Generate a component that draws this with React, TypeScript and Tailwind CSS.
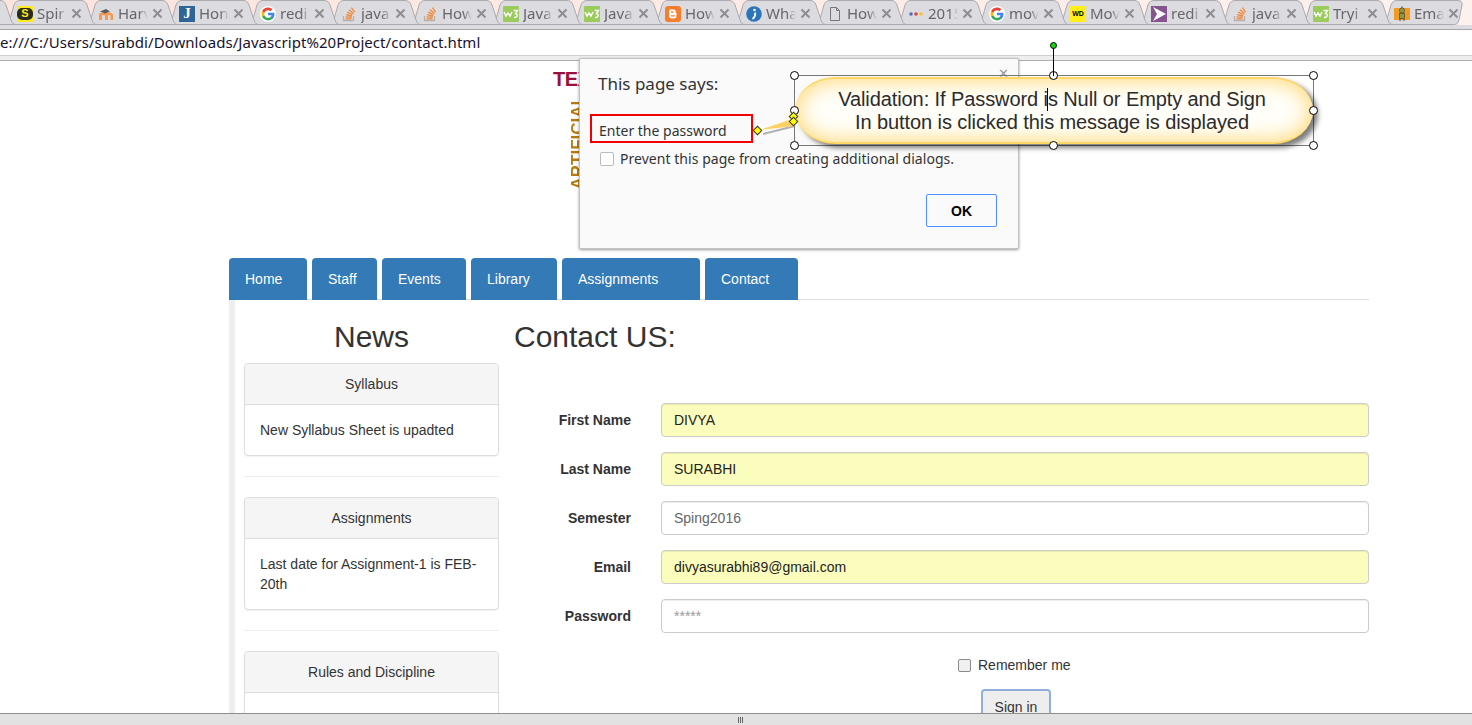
import React from 'react';

const X = () => (
    <svg width="11" height="11" viewBox="0 0 11 11" className="shrink-0">
        <path d="M1.5 1.5 L9.5 9.5 M9.5 1.5 L1.5 9.5" stroke="#8e8e92" strokeWidth="2" />
    </svg>
);

const Stack = () => (
    <svg width="16" height="16" viewBox="0 0 16 16" fill="none" stroke="#f08a3c" strokeWidth="1.3">
        <path d="M2.5 10 V14.5 H12.5 V10" stroke="#b8b0a8" />
        <path d="M4.5 12.8 H10.5 M4.7 10.8 L10.6 11.4 M5.2 8.6 L10.9 10 M6.2 6.2 L11.5 8.7 M8 3.8 L12.5 7.4 M10.4 1.6 L13.6 6.2" />
    </svg>
);

const W3 = () => (
    <div className="w-4 h-4 bg-[#9bcb5c] rounded-[1px] flex items-center justify-center">
        <svg width="16" height="16" viewBox="0 0 16 16" fill="none" stroke="#fff" strokeWidth="1.4">
            <path d="M1 6 L3 10 L5 7 L7 10 L9 6" />
            <path d="M10.5 4.5 H14.5 L12.5 7.5 C15 7.5 15 12 11 11.5" />
        </svg>
    </div>
);

const GoogleG = () => (
    <div className="w-4 h-4 bg-white rounded-full flex items-center justify-center">
        <svg width="14" height="14" viewBox="0 0 48 48">
            <path fill="#4285f4" d="M46 24.5c0-1.6-.1-3.100-.4-4.500H24v8.500h12.400c-.5 2.800-2.100 5.200-4.500 6.800v5.600h7.200C43.400 36.900 46 31.200 46 24.500z" />
            <path fill="#34a853" d="M24 46c6 0 11.100-2 14.800-5.400l-7.200-5.600c-2 1.300-4.600 2.100-7.600 2.100-5.800 0-10.700-3.900-12.500-9.200H4v5.800C7.700 41 15.300 46 24 46z" />
            <path fill="#fbbc05" d="M11.500 27.900c-.9-2.700-.9-5.500 0-8.200v-5.800H4c-2.700 5.300-2.700 14.500 0 19.800z" />
            <path fill="#ea4335" d="M24 10.900c3.300 0 6.200 1.100 8.500 3.300l6.400-6.400C35 4.200 30 2 24 2 15.300 2 7.700 7 4 13.900l7.500 5.800c1.800-5.300 6.700-8.800 12.500-8.800z" />
        </svg>
    </div>
);

const icons: Record<string, React.ReactNode> = {
    spir: (
        <div className="w-4 h-4 bg-[#ffe81f] flex items-center justify-center">
            <div className="w-4 h-[12px] bg-[#2b2b20] rounded-[5px] flex items-center justify-center">
                <span className="font-['Liberation_Sans',sans-serif] text-[11px] leading-none font-bold text-[#ffe81f]">S</span>
            </div>
        </div>
    ),
    moodle: (
        <svg width="16" height="16" viewBox="0 0 16 16">
            <path d="M1 14 V9 C1 7 3 6.500 5 7 C6 6 8 6 9 7 C11 6 15 6.500 15 9.500 V14 H12.500 V10 C12.500 8.500 10 8.500 10 10 V14 H7 V10 C7 8.500 4 8.500 4 10 V14 Z" fill="#f59a4e" />
            <path d="M2 5.500 L8 3 L12 5.500 L7 7.500 Z" fill="#5a5a5a" />
        </svg>
    ),
    j: (
        <div className="w-4 h-4 bg-[#2f6596] flex items-center justify-center">
            <span className="font-['Liberation_Serif',serif] text-[15px] leading-none font-bold text-white">J</span>
        </div>
    ),
    google: <GoogleG />,
    stack: <Stack />,
    w3: <W3 />,
    blogger: (
        <svg width="16" height="16" viewBox="0 0 16 16">
            <rect width="16" height="16" rx="3" fill="#f57d2c" />
            <path d="M5.500 3.500 H8.500 C10 3.500 10.800 4.500 10.800 6 V7 H11.500 V10 C11.500 11.500 10.500 12.500 9 12.500 H6.500 C5 12.500 4.200 11.500 4.200 10 V5 C4.200 4 4.500 3.500 5.500 3.500 Z" fill="#fff" />
            <path d="M6 6 H8.300 M6 9.800 H9.800" stroke="#f57d2c" strokeWidth="1.300" />
        </svg>
    ),
    info: (
        <svg width="16" height="16" viewBox="0 0 16 16">
            <circle cx="8" cy="8" r="7.800" fill="#2a75bb" />
            <circle cx="8.500" cy="4" r="1.300" fill="#fff" />
            <path d="M9.300 6.500 C9.300 9 9.500 11 6.500 13" stroke="#fff" strokeWidth="1.800" fill="none" />
        </svg>
    ),
    file: (
        <svg width="16" height="16" viewBox="0 0 16 16" fill="#dcdce0" stroke="#77777a">
            <path d="M3.500 1.500 H9.500 L12.500 4.500 V14.500 H3.500 Z" />
            <path d="M9.500 1.500 V4.500 H12.500" fill="none" />
        </svg>
    ),
    dots: (
        <svg width="16" height="16" viewBox="0 0 16 16">
            <circle cx="3" cy="8" r="1.800" fill="#4e6cc4" />
            <circle cx="8" cy="8" r="1.800" fill="#e0453c" />
            <circle cx="13" cy="8" r="1.800" fill="#f5c72e" />
        </svg>
    ),
    wd: (
        <div className="w-4 h-4 bg-[#ffee1a] flex items-center justify-center">
            <span className="font-['Liberation_Sans',sans-serif] text-[7px] leading-none font-bold text-black">WD</span>
        </div>
    ),
    vs: (
        <svg width="16" height="16" viewBox="0 0 16 16">
            <rect width="16" height="16" fill="#85548e" />
            <path d="M2 1 L15 8 L2 15 L6 8 Z" fill="#fff" />
        </svg>
    ),
    robot: (
        <svg width="16" height="16" viewBox="0 0 16 16">
            <rect y="2" width="16" height="12" fill="#f39a20" />
            <circle cx="8" cy="4.500" r="2.600" fill="#8c9b3a" stroke="#444" strokeWidth="0.700" />
            <rect x="5.500" y="7.500" width="5" height="5" fill="#8c9b3a" stroke="#444" strokeWidth="0.700" />
            <path d="M6 13 V15 M10 13 V15 M8 0.500 V2" stroke="#444" />
        </svg>
    ),
};

const tabs = [
    { icon: '', title: '' },
    { icon: 'spir', title: 'Spir' },
    { icon: 'moodle', title: 'Harv' },
    { icon: 'j', title: 'Hon' },
    { icon: 'google', title: 'redi' },
    { icon: 'stack', title: 'java' },
    { icon: 'stack', title: 'How' },
    { icon: 'w3', title: 'Java' },
    { icon: 'w3', title: 'Java' },
    { icon: 'blogger', title: 'How' },
    { icon: 'info', title: 'Wha' },
    { icon: 'file', title: 'How' },
    { icon: 'dots', title: '2015' },
    { icon: 'google', title: 'mov' },
    { icon: 'wd', title: 'Mov' },
    { icon: 'vs', title: 'redi' },
    { icon: 'stack', title: 'java' },
    { icon: 'w3', title: 'Tryi' },
    { icon: 'robot', title: 'Ema' },
];

const TAB_PATH = 'M0 24.500 C3 24.500 4 22 5 19 L9 5 C10 2 12 0.500 15 0.500 H76 C79 0.500 81 2 82 5 L87 20 C88 23 89 24.500 92 24.500 Z';
const LAST_TAB_PATH = 'M0 24.500 C3 24.500 4 22 5 19 L9 5 C10 2 12 0.500 15 0.500 H76 C79 0.500 80.500 2 80 5 L77 20 C76 23 75 24.500 72 24.500 Z';

const Handle = ({ className }: { className: string }) => (
    <div className={`absolute w-[9px] h-[9px] rounded-full bg-white border border-black ${className}`} />
);

const Diamond = ({ className }: { className: string }) => (
    <div className={`absolute w-[7px] h-[7px] rotate-45 bg-[#ffff00] border border-[#333] ${className}`} />
);

const News = ({ title, body, className }: { title: string; body?: string; className?: string }) => (
    <div className={`border border-[#ddd] rounded bg-white shadow-[0_1px_1px_rgba(0,0,0,0.05)] ${className ?? ''}`}>
        <div className="h-[41px] bg-[#f5f5f5] border-b border-[#ddd] rounded-t flex items-center justify-center text-[#333]">
            {title}
        </div>
        {body && <div className="p-[15px] leading-5 text-[#333]">{body}</div>}
    </div>
);

const Field = ({ label, value, filled, valueColor }: { label: string; value: string; filled?: boolean; valueColor?: string }) => (
    <div className="flex items-center h-[34px] mb-[15px]">
        <label className="w-[117px] text-right font-bold text-[#333]">{label}</label>
        <div
            className={`ml-[30px] flex-1 h-[34px] border border-[#ccc] rounded px-3 flex items-center shadow-[inset_0_1px_1px_rgba(0,0,0,0.075)] ${
                filled ? 'bg-[#fbfdbc] text-[#222]' : 'bg-white'
            } ${valueColor ?? ''}`}
        >
            {value}
        </div>
    </div>
);

const navItems = [
    { label: 'Home', width: 'w-[78px]' },
    { label: 'Staff', width: 'w-[65px]' },
    { label: 'Events', width: 'w-[84px]' },
    { label: 'Library', width: 'w-[86px]' },
    { label: 'Assignments', width: 'w-[138px]' },
    { label: 'Contact', width: 'w-[93px]' },
];

const App = () => {
    return (
        <div className="relative w-[1472px] h-[725px] overflow-hidden bg-white flex flex-col font-['Liberation_Sans',Arial,sans-serif] text-sm">
            {/* tab strip */}
            <div className="h-[25px] shrink-0 bg-gradient-to-r from-[#fde3dc] to-[#fdf1ee] flex ml-[-76px]">
                {tabs.map((t, i) => (
                    <div
                        key={i}
                        className="relative w-[81px] h-[25px] shrink-0"
                        style={{ zIndex: 30 - i }}
                    >
                        <svg width="96" height="25" viewBox="0 0 96 25" className="absolute inset-0">
                            <path d={i === tabs.length - 1 ? LAST_TAB_PATH : TAB_PATH} fill="#dcdce0" stroke="#ababaf" />
                        </svg>
                        {t.icon && (
                            <div className="relative h-[25px] pl-3 flex items-center gap-1 pt-[2px]">
                                <div className="w-4 h-4 shrink-0">{icons[t.icon]}</div>
                                <div className="w-[30px] shrink-0 overflow-hidden whitespace-nowrap text-[15px] leading-[22px] -mt-[2px] text-[#66666a] font-['Noto_Sans',sans-serif] [mask-image:linear-gradient(to_right,#000_70%,transparent)]">
                                    {t.title}
                                </div>
                                <X />
                            </div>
                        )}
                    </div>
                ))}
            </div>

            {/* address bar */}
            <div className="h-[31px] shrink-0 bg-white border-t-[4px] border-t-[#dcdce0] flex items-center text-[15px] text-[#17132e] font-['Noto_Sans',sans-serif]">
                <div className="w-full h-full border-t border-[#a5a5a8] border-b border-b-[#cfcfcf] flex items-center whitespace-nowrap tracking-[0.05px]">
                    e:///C:/Users/surabdi/Downloads/Javascript%20Project/contact.html
                </div>
            </div>
            <div className="h-[5px] shrink-0 bg-[#eeeeee] border-b border-[#adadad]" />

            {/* page */}
            <div className="flex-1 min-h-0 overflow-hidden bg-white text-[#333] flex flex-col">
                {/* logo peeking out behind the dialog */}
                <div className="h-[197px] shrink-0 pl-[553px] pt-[6px] flex flex-col items-start overflow-hidden">
                    <div className="text-[20px] leading-6 font-bold text-[#99103c] tracking-tight">TEX</div>
                    <div className="ml-[16px] mt-[4px] [writing-mode:vertical-rl] rotate-180 whitespace-nowrap text-[17px] leading-[17px] font-bold text-[#b97a0c]">
                        ARTIFICIAL
                    </div>
                </div>

                <div className="ml-[229px] w-[1140px] shrink-0">
                    <div className="flex gap-[5px] h-[42px] border-b border-[#ddd] items-stretch">
                        {navItems.map((n) => (
                            <div key={n.label} className={`${n.width} h-[42px] bg-[#337ab7] rounded-t text-white px-4 flex items-center`}>
                                {n.label}
                            </div>
                        ))}
                    </div>
                    <div className="flex border-l-[6px] border-[#eeeeee] h-[500px]">
                        <div className="w-[255px] ml-[9px] shrink-0">
                            <h2 className="text-[30px] leading-[33px] text-center mt-5 mb-[10px]">News</h2>
                            <News title="Syllabus" body="New Syllabus Sheet is upadted" className="h-[93px]" />
                            <div className="h-px bg-[#eee] my-5" />
                            <News title="Assignments" body="Last date for Assignment-1 is FEB-20th" className="h-[113px]" />
                            <div className="h-px bg-[#eee] my-5" />
                            <News title="Rules and Discipline" body=" " className="h-[113px]" />
                        </div>
                        <div className="ml-[15px] flex-1">
                            <h2 className="text-[30px] leading-[33px] mt-5">Contact US:</h2>
                            <div className="mt-[50px]">
                                <Field label="First Name" value="DIVYA" filled />
                                <Field label="Last Name" value="SURABHI" filled />
                                <Field label="Semester" value="Sping2016" valueColor="text-[#666]" />
                                <Field label="Email" value="divyasurabhi89@gmail.com" filled />
                                <Field label="Password" value="*****" valueColor="text-[#999]" />
                            </div>
                            <div className="flex items-center ml-[444px] mt-[22px]">
                                <div className="w-[13px] h-[13px] border border-[#8a8a8a] rounded-[2px] bg-[#f0f0f0]" />
                                <span className="ml-[7px]">Remember me</span>
                            </div>
                            <div className="ml-[467px] mt-[14px] w-[70px] h-[34px] pt-px border-2 border-[#8fb0dc] rounded bg-[#eeeeee] flex items-center justify-center">
                                Sign in
                            </div>
                        </div>
                    </div>
                </div>
            </div>

            {/* dialog */}
            <div className="absolute left-[579px] top-[58px] w-[440px] h-[191px] pl-[18px] pr-[21px] pt-[13px] flex flex-col items-start bg-[#fafafa] border border-[#c2c2c2] rounded-[2px] shadow-[0_1px_3px_rgba(0,0,0,0.4)] font-['Noto_Sans',sans-serif] text-[#333]">
                <div className="absolute right-[9px] top-[6px] text-[#999] text-[13px] leading-4">✕</div>
                <div className="text-[17px] leading-6">This page says:</div>
                <div className="ml-px mt-[25px] text-[14px] leading-5">Enter the password</div>
                <div className="ml-[2px] mt-[8px] flex items-center gap-[6px] whitespace-nowrap text-[14px] leading-5 tracking-[0.04px]">
                    <div className="w-[14px] h-[14px] border border-[#bbb] rounded-[2px] bg-white" />
                    Prevent this page from creating additional dialogs.
                </div>
                <div className="self-end mt-[25px] w-[71px] h-[33px] border border-[#4d90fe] rounded-[2px] bg-[#fafafa] flex items-center justify-center text-[14px] font-bold text-black font-['Liberation_Sans',sans-serif]">OK</div>
            </div>

            {/* red highlight */}
            <div className="absolute left-[590px] top-[114px] w-[163px] h-[29px] border-2 border-[#f00000]" />

            {/* callout */}
            <svg width="50" height="30" viewBox="0 0 50 30" className="absolute left-[755px] top-[110px]">
                <path d="M8 24 L40 16" stroke="#777" strokeWidth="2" opacity="0.55" />
                <path d="M5 20 L40 8 L40 16 Z" fill="#ffd064" />
            </svg>
            <div className="absolute left-[794px] top-[75px] w-[520px] h-[71px] border border-[#777]">
                <div className="absolute inset-x-0 top-[1px] bottom-[1px] pr-[4px] rounded-[42px/35px] bg-[#fffef9] border-t-2 border-b-2 border-[#ffd765] shadow-[5px_4px_5px_rgba(0,0,0,0.5),inset_0_0_22px_#ffd362] flex flex-col items-center justify-center text-[20px] leading-[23px] tracking-[-0.09px] text-[#2b2b2b]">
                    <div>Validation: If Password is Null or Empty and Sign</div>
                    <div>In button is clicked this message is displayed</div>
                </div>
                <div className="absolute left-[252px] top-[12px] w-px h-[23px] bg-black" />
                <Handle className="left-[-5px] top-[-5px]" />
                <Handle className="left-[254px] top-[-5px]" />
                <Handle className="right-[-5px] top-[-5px]" />
                <Handle className="left-[-5px] top-[30px]" />
                <Handle className="right-[-5px] top-[30px]" />
                <Handle className="left-[-5px] bottom-[-5px]" />
                <Handle className="left-[254px] bottom-[-5px]" />
                <Handle className="right-[-5px] bottom-[-5px]" />
                <div className="absolute left-[258px] top-[-30px] w-px h-[30px] bg-black" />
                <div className="absolute left-[255px] top-[-34px] w-[7px] h-[7px] rounded-full bg-[#0fd60f] border border-black" />
                <Diamond className="left-[-5px] top-[37px]" />
                <Diamond className="left-[-5px] top-[42px]" />
            </div>
            <Diamond className="left-[754px] top-[127px]" />

            {/* bottom scrollbar */}
            <div className="absolute left-0 right-0 bottom-0 h-[12px] bg-[#e2e2e2] border-t border-[#8f8f8f] flex items-center justify-center">
                <div className="flex gap-[1px] ml-[9px]">
                    <div className="w-px h-[6px] bg-[#666]" />
                    <div className="w-px h-[6px] bg-[#666]" />
                    <div className="w-px h-[6px] bg-[#666]" />
                </div>
            </div>
        </div>
    );
};

export default App;
